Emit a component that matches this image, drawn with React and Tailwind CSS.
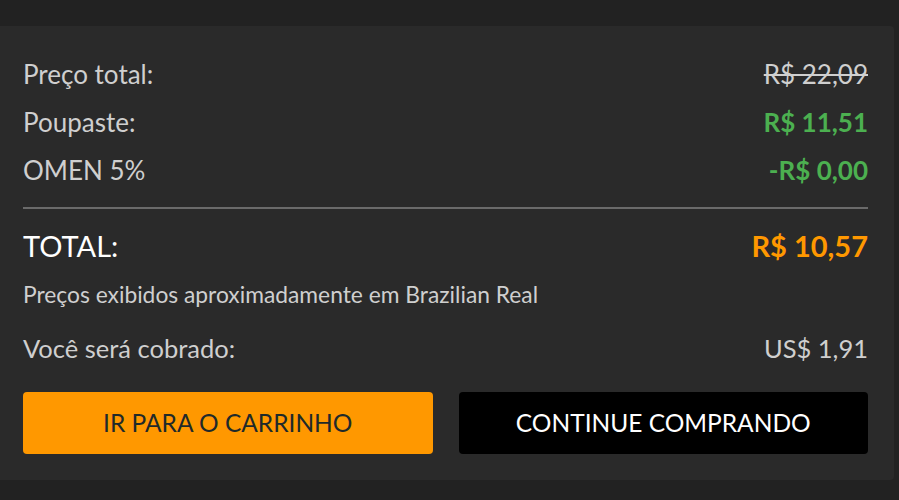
export default function App() {
  const font = { fontFamily: "Lato, 'Noto Sans', sans-serif" };
  return (
    <div className="w-[899px] h-[500px] bg-[#222222] pt-[26px]" style={font}>
      <div className="w-[894px] h-[454px] bg-[#2a2a2a] rounded-r-[4px] pl-[23px] pr-[26px] pt-[24px]">
        <div className="flex items-center justify-between h-[48px] text-[26px] text-[#cfcfcf]">
          <span>Preço total:</span>
          <span className="line-through">R$ 22,09</span>
        </div>
        <div className="flex items-center justify-between h-[48px] text-[26px]">
          <span className="text-[#cfcfcf]">Poupaste:</span>
          <span className="text-[#4cb050] font-bold">R$ 11,51</span>
        </div>
        <div className="flex items-center justify-between h-[48px] text-[26px]">
          <span className="text-[#cfcfcf]">OMEN 5%</span>
          <span className="text-[#4cb050] font-bold">-R$ 0,00</span>
        </div>
        <div className="mt-[13px] h-[2px] bg-[#6a6a6a]" />
        <div className="flex items-center justify-between h-[48px] mt-[13px]">
          <span className="text-[29px] text-white">TOTAL:</span>
          <span className="text-[29px] font-bold text-[#ff9800]">R$ 10,57</span>
        </div>
        <div className="flex items-center h-[48px] text-[22.8px] text-[#cfcfcf]">
          Preços exibidos aproximadamente em Brazilian Real
        </div>
        <div className="flex items-center justify-between h-[48px] mt-[6px] text-[25.5px] text-[#cfcfcf]">
          <span>Você será cobrado:</span>
          <span>US$ 1,91</span>
        </div>
        <div className="grid grid-cols-2 gap-[26px] mt-[20px]">
          <button className="h-[62px] rounded-[4px] bg-[#ff9800] text-[#1f2a2a] text-[24.5px]">
            IR PARA O CARRINHO
          </button>
          <button className="h-[62px] rounded-[4px] bg-black text-white text-[24.5px]">
            CONTINUE COMPRANDO
          </button>
        </div>
      </div>
    </div>
  );
}
